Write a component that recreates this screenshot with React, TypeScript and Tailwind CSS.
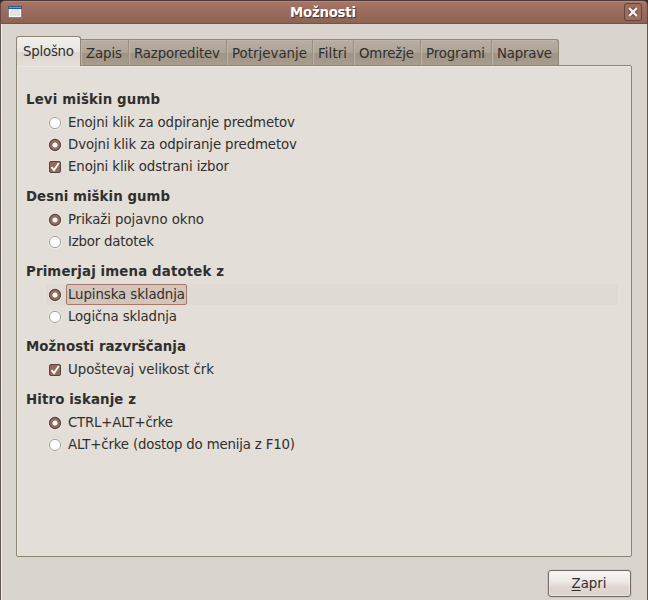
import type { ReactNode } from "react";

type Kind = "radio" | "check";
interface Option {
  label: string;
  width: number;
  kind: Kind;
  on?: boolean;
  focused?: boolean;
}

// Renders a label at an exact advance width so hinting differences do not shift the layout.
function Label({ children, width, bold, className = "" }: { children: string; width: number; bold?: boolean; className?: string }) {
  return (
    <svg width={width} height="20" className={`block shrink-0 overflow-visible ${className}`}>
      <text x="0" y="15" textLength={width} fill="currentColor" fontSize="13.33" fontWeight={bold ? 700 : 400}>
        {children}
      </text>
    </svg>
  );
}

function Radio({ on }: { on?: boolean }) {
  return (
    <svg width="14" height="14" viewBox="0 0 14 14" className="block">
      <circle cx="7" cy="7.4" r="6.4" fill="none" stroke="#efebe5" strokeWidth="1" />
      {on ? (
        <>
          <circle cx="7" cy="7" r="5.6" fill="#9a6a5c" stroke="#594540" strokeWidth="1.1" />
          <circle cx="7" cy="7" r="2.5" fill="#fff" />
        </>
      ) : (
        <circle cx="7" cy="7" r="5.6" fill="#fff" stroke="#aaa193" strokeWidth="1" />
      )}
    </svg>
  );
}

function Check() {
  return (
    <svg width="14" height="14" viewBox="0 0 14 14" className="block">
      <rect x="1.5" y="1.5" width="11" height="11" rx="1.5" fill="#986859" stroke="#594540" />
      <path d="M3.6 7.2 L6 10.2 L10.8 3" fill="none" stroke="#fff" strokeWidth="1.9" />
    </svg>
  );
}

const tabs = [
  { name: "Zapis", w: 48, t: 36 },
  { name: "Razporeditev", w: 98, t: 86 },
  { name: "Potrjevanje", w: 86, t: 75 },
  { name: "Filtri", w: 41, t: 29 },
  { name: "Omrežje", w: 67, t: 55 },
  { name: "Programi", w: 71, t: 59 },
  { name: "Naprave", w: 67, t: 55 },
];

const groups: { title: string; width: number; options: Option[] }[] = [
  {
    title: "Levi miškin gumb",
    width: 134,
    options: [
      { label: "Enojni klik za odpiranje predmetov", width: 227, kind: "radio" },
      { label: "Dvojni klik za odpiranje predmetov", width: 229, kind: "radio", on: true },
      { label: "Enojni klik odstrani izbor", width: 161, kind: "check", on: true },
    ],
  },
  {
    title: "Desni miškin gumb",
    width: 144,
    options: [
      { label: "Prikaži pojavno okno", width: 136, kind: "radio", on: true },
      { label: "Izbor datotek", width: 86, kind: "radio" },
    ],
  },
  {
    title: "Primerjaj imena datotek z",
    width: 198,
    options: [
      { label: "Lupinska skladnja", width: 117, kind: "radio", on: true, focused: true },
      { label: "Logična skladnja", width: 109, kind: "radio" },
    ],
  },
  {
    title: "Možnosti razvrščanja",
    width: 160,
    options: [{ label: "Upoštevaj velikost črk", width: 146, kind: "check", on: true }],
  },
  {
    title: "Hitro iskanje z",
    width: 110,
    options: [
      { label: "CTRL+ALT+črke", width: 105, kind: "radio", on: true },
      { label: "ALT+črke (dostop do menija z F10)", width: 227, kind: "radio" },
    ],
  },
];

function OptionRow({ option }: { option: Option }) {
  return (
    <div className={`ml-[29px] mr-[13px] flex h-[22px] items-center bg-clip-content pt-px ${option.focused ? "bg-[#dfdad3]" : ""}`}>
      <div className="ml-[2px] mt-px w-[18px] shrink-0">{option.kind === "radio" ? <Radio on={option.on} /> : <Check />}</div>
      <div
        className={`flex h-[21px] items-start rounded-[2px] border px-px ${
          option.focused ? "border-[#a87767] bg-[#d3c5bb]" : "border-transparent"
        }`}
      >
        <Label width={option.width} className="-mt-px">
          {option.label}
        </Label>
      </div>
    </div>
  );
}

function TitleBar({ children }: { children: ReactNode }) {
  return (
    <header className="flex h-6 shrink-0 items-center rounded-t-[5px] border border-b-[#74514a] border-l-[#664b44] border-r-[#5b443e] border-t-[#4e3c38] bg-linear-to-b from-[#a97466] to-[#8d6355] shadow-[inset_0_1px_0_#b98578]">
      <svg width="14" height="12" viewBox="0 0 14 12" className="ml-[7px] shrink-0">
        <rect x=".5" y=".5" width="13" height="11" fill="#e1e4e0" stroke="#858783" />
        <rect x="1.5" y="2.5" width="11" height="8" fill="none" stroke="#fff" />
        <rect width="14" height="3" fill="#2c5998" />
        <rect x="1" y="1" width="12" height="1" fill="#6b9bd4" />
      </svg>
      <div className="flex flex-1 justify-center pr-px">{children}</div>
      <svg width="18" height="18" viewBox="0 0 18 18" className="mr-[5px] shrink-0">
        <rect x=".5" y=".5" width="17" height="17" rx="2.5" fill="#9c6d5f" stroke="#60463f" />
        <path d="M5.5 5.5l7 7m0-7l-7 7" stroke="#60463f" strokeWidth="4.5" />
        <path d="M5.2 5.2l7.6 7.6m0-7.6l-7.6 7.6" stroke="#f3ebe8" strokeWidth="2.5" />
      </svg>
    </header>
  );
}

export default function App() {
  return (
    <div className="flex h-[600px] w-[648px] flex-col overflow-hidden bg-[#302c2a] font-['DejaVu_Sans',sans-serif] text-[13.33px] text-[#302f2d]">
      <TitleBar>
        <Label width={66} bold className="text-white [text-shadow:1px_1px_1px_#4b3029]">
          Možnosti
        </Label>
      </TitleBar>
      <main className="flex flex-1 flex-col border-l border-r border-l-[#625750] border-r-[#625750] bg-[#d9d4cd] pl-[15px] pr-[15px] pt-3 shadow-[inset_1px_0_0_#f1eeea]">
        <nav className="relative z-10 -mb-px flex h-[30px] shrink-0 items-end">
          <div className="flex h-[30px] w-[65px] justify-center rounded-t-[3px] border border-b-0 border-[#8d8574] bg-[linear-gradient(#f2f0ed_0,#e8e5e1_15px,#dcd7d0_15px,#e3ded8_100%)] pt-[4px]">
            <Label width={51}>Splošno</Label>
          </div>
          {tabs.map((tab, i) => (
            <div
              key={tab.name}
              className={`flex h-[27px] items-start border-b border-r border-t border-b-[#8d8574] border-t-[#918878] bg-[linear-gradient(#b8afa1_0,#ada396_13px,#9e9485_13px,#a79c8d_100%)] pl-[5px] pt-[3px] shadow-[inset_1px_1px_0_#bfb6a9] ${
                i === tabs.length - 1 ? "rounded-tr-[3px] border-r-[#918878]" : "border-r-[#988f80]"
              }`}
              style={{ width: tab.w }}
            >
              <Label width={tab.t}>{tab.name}</Label>
            </div>
          ))}
        </nav>
        <section className="h-[492px] shrink-0 rounded-b-[2px] rounded-tr-[2px] border border-[#8d8574] bg-[#e3ded8] pt-[22px] shadow-[inset_1px_1px_0_#ece9e4]">
          {groups.map((group, i) => (
            <div key={group.title}>
              <div className={`pl-[9px] ${i === 0 ? "h-[23px] pt-px" : "h-[31px] pt-[9px]"}`}>
                <Label width={group.width} bold>
                  {group.title}
                </Label>
              </div>
              {group.options.map((option) => (
                <OptionRow key={option.label} option={option} />
              ))}
            </div>
          ))}
        </section>
        <button className="mr-px mt-[13px] flex h-[27px] w-[83px] shrink-0 items-center justify-center self-end rounded-[3px] border border-[#746b66] bg-[linear-gradient(#f8f6f5_0,#ece7e4_45%,#e0d6d1_65%,#ded2cc_100%)] shadow-[inset_0_0_0_1px_#f5f2ef88,0_0_0_1px_#cdc8bf]">
          <span className="-ml-px text-[13.33px] leading-5">
            <span className="underline underline-offset-2">Z</span>apri
          </span>
        </button>
      </main>
    </div>
  );
}
